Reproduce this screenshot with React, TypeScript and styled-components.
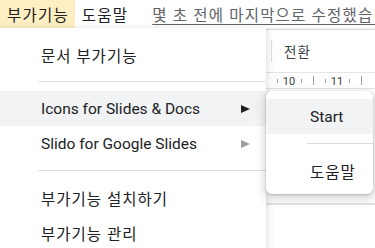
import React, { FC } from 'react'
import styled, { createGlobalStyle } from 'styled-components'

const GlobalStyle = createGlobalStyle`
  html, body {
    margin: 0;
    padding: 0;
    background: #fff;
  }
  body {
    width: 375px;
    height: 248px;
    overflow: hidden;
    font-family: Roboto, "Noto Sans CJK KR", "Noto Sans", sans-serif;
    color: #202124;
  }
`

const Page = styled.div`
  position: relative;
  width: 375px;
  height: 248px;
  overflow: hidden;
  background: #fff;
`

const MenuBar = styled.div`
  display: flex;
  align-items: stretch;
  height: 28px;
  position: relative;
  z-index: 1;
  background: #fff;
  box-shadow: 0 1px 2px rgba(60, 64, 67, 0.12);
`

const MenuButton = styled.div<{ $active?: boolean }>`
  display: flex;
  align-items: center;
  flex-shrink: 0;
  padding: 0 6px 0 7px;
  font-size: 15.5px;
  letter-spacing: 1.2px;
  white-space: nowrap;
  color: #202124;
  background: ${(p) => (p.$active ? '#feefc3' : 'transparent')};
`

const SaveStatus = styled.div`
  display: flex;
  align-items: center;
  flex-shrink: 0;
  margin-left: 18px;
  font-size: 15.5px;
  letter-spacing: 1.2px;
  color: #5f6368;
  white-space: nowrap;
  text-decoration: underline;
  text-underline-offset: 3px;
`

const Workspace = styled.div`
  display: flex;
  flex-direction: column;
`

const Toolbar = styled.div`
  display: flex;
  align-items: center;
  height: 42px;
  margin-top: 1px;
  padding-left: 271px;
  border-top: 1px solid #e3e3e3;
`

const ToolDivider = styled.div`
  width: 1px;
  height: 22px;
  background: #dadce0;
`

const ToolLabel = styled.div`
  margin-left: 12px;
  font-size: 13.5px;
  letter-spacing: 1px;
  color: #3c4043;
`

const Ruler = styled.div`
  height: 15px;
  border-top: 1px solid #e3e3e3;
  border-bottom: 1px solid #e3e3e3;
  svg {
    display: block;
  }
`

const Canvas = styled.div`
  height: 114px;
  border-bottom: 2px solid #e3e3e3;
`

const Dropdown = styled.div`
  position: absolute;
  top: 28px;
  left: 0;
  width: 266px;
  bottom: -12px;
  z-index: 2;
  padding-top: 9px;
  background: #fff;
  border-radius: 0 0 4px 0;
  box-shadow: 0 2px 6px 2px rgba(60, 64, 67, 0.15);
`

const Submenu = styled.div`
  position: absolute;
  top: 91px;
  left: 266px;
  width: 107px;
  z-index: 3;
  padding: 8px 0 6px;
  background: #fff;
  border-radius: 6px;
  box-shadow: 0 1px 3px rgba(60, 64, 67, 0.3), 0 4px 8px 3px rgba(60, 64, 67, 0.15);
`

const Item = styled.div<{ $active?: boolean; $indent: number; $ko?: boolean }>`
  display: flex;
  align-items: center;
  height: 35px;
  padding-left: ${(p) => p.$indent}px;
  padding-right: 16px;
  font-size: 15.5px;
  letter-spacing: ${(p) => (p.$ko ? '1px' : '0')};
  color: #202124;
  white-space: nowrap;
  background: ${(p) => (p.$active ? '#f1f3f4' : 'transparent')};
`

const Arrow = styled.svg`
  margin-left: auto;
`

const Separator = styled.div<{ $indent: number }>`
  height: 1px;
  margin: 9px 0 9px ${(p) => p.$indent}px;
  background: #dadce0;
`

const SubArrow: FC<{ color: string }> = ({ color }) => (
  <Arrow width="9" height="8" viewBox="0 0 9 8">
    <polygon points="0,0 9,4 0,8" fill={color} />
  </Arrow>
)

const rulerNumbers = [
  { x: 289, label: '10' },
  { x: 337, label: '11' },
]
const smallTicks = [277, 301, 325, 349]
const bigTicks = [313, 361]

const RulerScale: FC = () => (
  <svg width="375" height="15" viewBox="0 0 375 15">
    {smallTicks.map((x) => (
      <line key={x} x1={x + 0.5} x2={x + 0.5} y1="6" y2="10" stroke="#9aa0a6" strokeWidth="1" />
    ))}
    {bigTicks.map((x) => (
      <line key={x} x1={x + 0.5} x2={x + 0.5} y1="3" y2="12" stroke="#9aa0a6" strokeWidth="1" />
    ))}
    {rulerNumbers.map((n) => (
      <text
        key={n.label}
        x={n.x}
        y="12"
        textAnchor="middle"
        fontSize="11"
        fontFamily="Roboto, sans-serif"
        fill="#3c4043"
      >
        {n.label}
      </text>
    ))}
  </svg>
)

const App: FC = () => (
  <Page>
    <GlobalStyle />
    <MenuBar>
      <MenuButton $active>부가기능</MenuButton>
      <MenuButton>도움말</MenuButton>
      <SaveStatus>몇 초 전에 마지막으로 수정했습니다</SaveStatus>
    </MenuBar>
    <Workspace>
      <Toolbar>
        <ToolDivider />
        <ToolLabel>전환</ToolLabel>
      </Toolbar>
      <Ruler>
        <RulerScale />
      </Ruler>
      <Canvas />
    </Workspace>

    <Dropdown>
      <Item $indent={41} $ko>문서 부가기능</Item>
      <Separator $indent={38} />
      <Item $indent={41} $active>
        Icons for Slides &amp; Docs
        <SubArrow color="#202124" />
      </Item>
      <Item $indent={41}>
        Slido for Google Slides
        <SubArrow color="#9aa0a6" />
      </Item>
      <Separator $indent={38} />
      <Item $indent={41} $ko>부가기능 설치하기</Item>
      <Item $indent={41} $ko>부가기능 관리</Item>
    </Dropdown>

    <Submenu>
      <Item $indent={44} $active>Start</Item>
      <Separator $indent={41} />
      <Item $indent={44} $ko>도움말</Item>
    </Submenu>
  </Page>
)

export default App
